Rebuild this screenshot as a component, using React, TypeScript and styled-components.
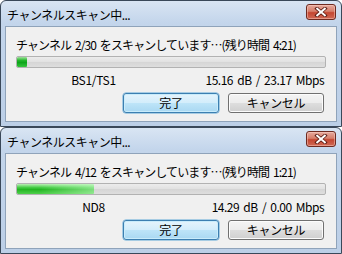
import React from 'react';
import styled, { createGlobalStyle, css } from 'styled-components';

const Global = createGlobalStyle`
  html, body { margin: 0; padding: 0; background: #ffffff; }
  body {
    width: 342px;
    height: 254px;
    overflow: hidden;
    font-family: "Noto Sans CJK JP", "Noto Sans", sans-serif;
    color: #000;
  }
`;

const Stack = styled.div`
  display: flex;
  flex-direction: column;
  width: 342px;
`;

const Window = styled.section`
  box-sizing: border-box;
  height: 127px;
  border: 1px solid #3a4859;
  border-radius: 6px 6px 0 0;
  background: linear-gradient(to bottom, #d9e5f3 0px, #c3d5eb 22px, #bccfe7 100%);
  padding: 0 4px 4px 4px;
  display: flex;
  flex-direction: column;
`;

const TitleBar = styled.header`
  height: 25px;
  display: flex;
  align-items: flex-start;
  justify-content: space-between;
  padding-left: 2px;
  padding-right: 1px;
`;

const Title = styled.span`
  font-size: 12px;
  line-height: 15px;
  margin-top: 6px;
  letter-spacing: -0.5px;
  white-space: nowrap;
`;

const CloseButton = styled.button`
  box-sizing: border-box;
  width: 30px;
  height: 16px;
  margin-top: 3px;
  padding: 0;
  border: 1px solid #6e2a20;
  border-radius: 3px;
  background: linear-gradient(to bottom, #e6aa9e 0%, #d67e6a 45%, #c44631 55%, #d06a56 100%);
  box-shadow: inset 0 0 0 1px rgba(255, 215, 205, 0.45);
  display: flex;
  align-items: center;
  justify-content: center;
`;

const Client = styled.div`
  flex: 1;
  box-sizing: border-box;
  border: 1px solid #8fa3ba;
  background: #f0f0f0;
  padding: 10px 10px 0 10px;
  display: flex;
  flex-direction: column;
`;

const Message = styled.div`
  font-size: 12px;
  line-height: 15px;
  letter-spacing: -0.9px;
  word-spacing: 2px;
  white-space: nowrap;
`;

const Bar = styled.div`
  box-sizing: border-box;
  margin-top: 4px;
  height: 12px;
  border: 1px solid #b2b2b2;
  border-radius: 2px;
  background: linear-gradient(to bottom, #ececec 0%, #e2e2e2 45%, #d6d6d6 55%, #dedede 100%);
  overflow: hidden;
  display: flex;
`;

const Fill = styled.div<{ $glow: boolean }>`
  height: 100%;
  border-radius: 1px;
  background: ${(p) =>
    p.$glow
      ? css`linear-gradient(to right, rgba(255,255,255,0) 30%, rgba(200,255,200,0.55) 100%),
         linear-gradient(to bottom, #b9efb4 0%, #45cc46 35%, #24b523 55%, #4fd04c 100%)`
      : css`linear-gradient(to bottom, #9fe19c 0%, #22b62a 35%, #0ea51b 55%, #36c53d 100%)`};
`;

const Labels = styled.div`
  margin-top: 4px;
  display: grid;
  grid-template-columns: 155px 1fr;
  font-size: 12px;
  line-height: 15px;
  padding-right: 2px;
`;

const Channel = styled.span`
  text-align: center;
  letter-spacing: -0.3px;
`;

const Signal = styled.span`
  text-align: right;
  letter-spacing: -0.5px;
  word-spacing: 2px;
  white-space: nowrap;
`;

const Buttons = styled.div`
  margin-top: 6px;
  display: flex;
  justify-content: flex-end;
  gap: 9px;
  padding-right: 2px;
`;

const PushButton = styled.button<{ $default?: boolean }>`
  box-sizing: border-box;
  width: 96px;
  height: 20px;
  padding: 0;
  border-radius: 3px;
  font-family: "Noto Sans CJK JP", "Noto Sans", sans-serif;
  font-size: 12px;
  line-height: 14px;
  color: #000;
  letter-spacing: -0.3px;
  border: 1px solid #707070;
  background: linear-gradient(to bottom, #f4f4f4 0%, #ececec 48%, #dddddd 52%, #cfcfcf 100%);
  box-shadow: inset 0 0 0 1px #fcfcfc;
  ${(p) =>
    p.$default &&
    css`
      border-color: #3c7fb1;
      background: linear-gradient(to bottom, #e5f4fc 0%, #d3edfb 48%, #bde4f8 52%, #a9d8f2 100%);
      box-shadow: inset 0 0 0 1px #c9ecfb, 0 0 0 0.5px #5ea7d6;
    `}
`;

function CloseIcon() {
  return (
    <svg width="14" height="10" viewBox="0 0 14 10">
      <path
        d="M3 1.5 L11 8.5 M11 1.5 L3 8.5"
        stroke="#5a1a12"
        strokeWidth="3.6"
        strokeLinecap="square"
        fill="none"
      />
      <path
        d="M3.2 1.7 L10.8 8.3 M10.8 1.7 L3.2 8.3"
        stroke="#ffffff"
        strokeWidth="2"
        strokeLinecap="square"
        fill="none"
      />
    </svg>
  );
}

type ScanProps = {
  current: number;
  total: number;
  remaining: string;
  channel: string;
  signal: string;
  glow: boolean;
};

function ScanDialog({ current, total, remaining, channel, signal, glow }: ScanProps) {
  const pct = ((current - 1) / total) * 100;
  return (
    <Window>
      <TitleBar>
        <Title>チャンネルスキャン中...</Title>
        <CloseButton aria-label="閉じる">
          <CloseIcon />
        </CloseButton>
      </TitleBar>
      <Client>
        <Message>
          チャンネル {current}/{total} をスキャンしています…(残り時間 {remaining})
        </Message>
        <Bar>
          <Fill $glow={glow} style={{ width: `${pct}%` }} />
        </Bar>
        <Labels>
          <Channel>{channel}</Channel>
          <Signal>{signal}</Signal>
        </Labels>
        <Buttons>
          <PushButton $default>完了</PushButton>
          <PushButton>キャンセル</PushButton>
        </Buttons>
      </Client>
    </Window>
  );
}

export default function App() {
  return (
    <>
      <Global />
      <Stack>
        <ScanDialog
          current={2}
          total={30}
          remaining="4:21"
          channel="BS1/TS1"
          signal="15.16 dB / 23.17 Mbps"
          glow={false}
        />
        <ScanDialog
          current={4}
          total={12}
          remaining="1:21"
          channel="ND8"
          signal="14.29 dB / 0.00 Mbps"
          glow={true}
        />
      </Stack>
    </>
  );
}
